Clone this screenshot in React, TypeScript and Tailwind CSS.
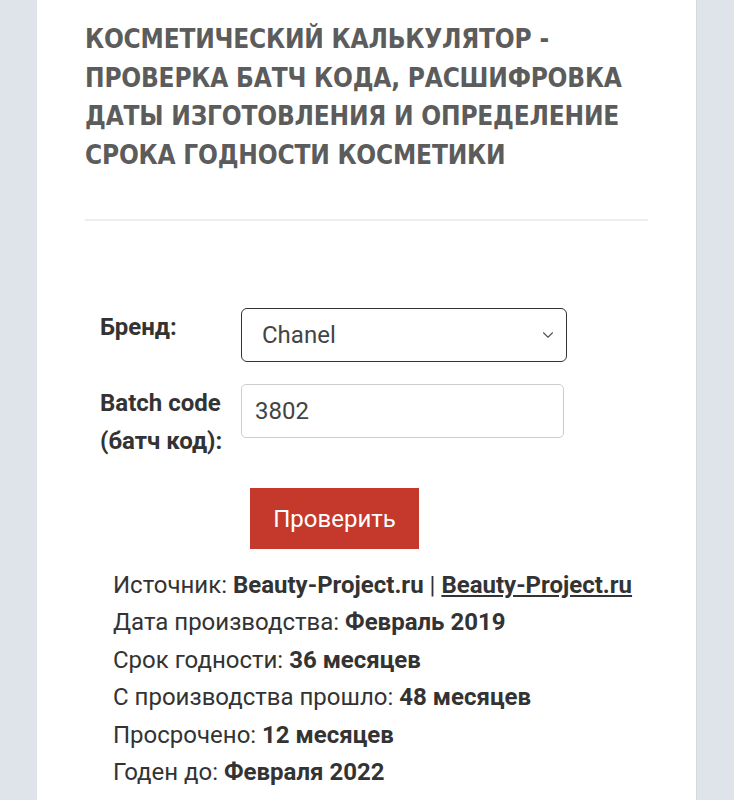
import { ChevronDown } from "lucide-react";

const rows: [string, string][] = [
  ["Дата производства: ", "Февраль 2019"],
  ["Срок годности: ", "36 месяцев"],
  ["С производства прошло: ", "48 месяцев"],
  ["Просрочено: ", "12 месяцев"],
  ["Годен до: ", "Февраля 2022"],
];

export default function App() {
  return (
    <div className="h-[800px] overflow-hidden bg-[#dfe3ea] font-['Roboto',sans-serif]">
      <div className="mx-auto min-h-[800px] w-[660px] border-r border-[#d3d7de] bg-white px-12 pt-[20px]">
        {/* Title */}
        <h1 className="font-['DejaVu_Sans_Condensed',sans-serif] text-[26px] font-bold uppercase leading-[38.5px] tracking-[-0.2px] text-[#5c5c5c]">
          Косметический калькулятор - проверка батч кода, расшифровка даты
          изготовления и определение срока годности косметики
        </h1>
        <div className="mt-[45px] h-[2px] bg-[#eeeeee]" />

        {/* Form */}
        <div className="mt-[87px] pl-[15px]">
          <div className="flex items-start">
            <div className="w-[141px] text-[24px] font-bold leading-[38px] text-[#333]">
              Бренд:
            </div>
            <div className="relative flex h-[54px] w-[326px] items-center rounded-[6px] border border-[#333] pl-[20px] text-[24px] text-[#444]">
              Chanel
              <ChevronDown
                size={18}
                strokeWidth={1.5}
                className="absolute right-[9px] top-[17px] text-[#555]"
              />
            </div>
          </div>
          <div className="mt-[22px] flex items-start">
            <div className="w-[141px] text-[24px] font-bold leading-[38px] text-[#333]">
              Batch code
              <br />
              (батч код):
            </div>
            <div className="flex h-[54px] w-[323px] items-center rounded-[5px] border border-[#ccc] pl-[13px] text-[24px] text-[#444]">
              3802
            </div>
          </div>
          <div className="mt-[28px] pl-[150px]">
            <button className="h-[61px] w-[169px] bg-[#c4392b] text-[24px] text-white">
              Проверить
            </button>
          </div>
        </div>

        {/* Results */}
        <div className="mt-[18px] pl-[28px] text-[24px] leading-[37.4px] text-[#333]">
          <div>
            Источник: <b>Beauty-Project.ru</b> |{" "}
            <b className="underline">Beauty-Project.ru</b>
          </div>
          {rows.map(([k, v]) => (
            <div key={k}>
              {k}
              <b>{v}</b>
            </div>
          ))}
        </div>
      </div>
    </div>
  );
}
